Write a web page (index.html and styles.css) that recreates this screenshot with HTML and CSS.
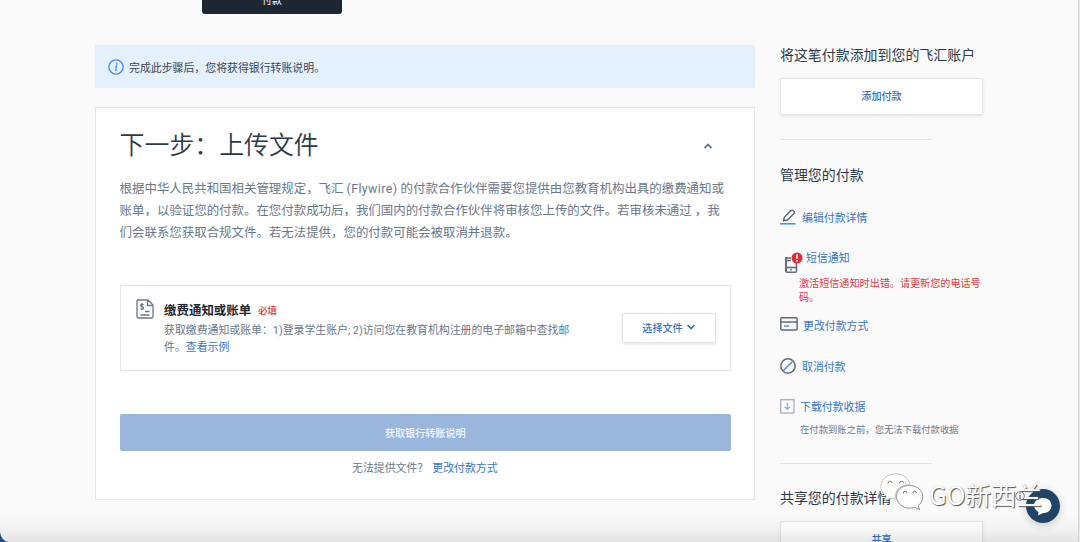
FILE: index.html
```html
<!DOCTYPE html>
<html lang="zh-CN">
<head>
<meta charset="utf-8">
<title>上传文件</title>
<link rel="stylesheet" href="styles.css">
</head>
<body>
<div class="page">
  <main class="main">
    <button class="pay">付款</button>
    <div class="notice">
      <svg class="notice-icon" viewBox="0 0 16 16" width="16" height="16" fill="none" stroke="#468df5"><circle cx="8" cy="8" r="7.1" stroke-width="1.4"/><circle cx="8.7" cy="4.9" r=".9" fill="#468df5" stroke="none"/><path d="M7.2 7.1h1.3l-.9 4.1h1.2" stroke-width="1.2"/></svg>
      <span>完成此步骤后，您将获得银行转账说明。</span>
    </div>
    <section class="card">
      <header class="card-head">
        <h1>下一步：上传文件</h1>
        <svg viewBox="0 0 10 8" width="10" height="8" fill="none" stroke="#69788c" stroke-width="1.8"><path d="M1.5 6 5 2.5 8.5 6"/></svg>
      </header>
      <p class="intro">根据中华人民共和国相关管理规定，飞汇 <span class="brand">(Flywire)</span> 的付款合作伙伴需要您提供由您教育机构出具的缴费通知或<br>账单，以验证您的付款。在您付款成功后，我们国内的付款合作伙伴将审核您上传的文件。若审核未通过 ，我<br>们会联系您获取合规文件。若无法提供，您的付款可能会被取消并退款。</p>
      <div class="upload">
        <svg class="doc" viewBox="0 0 18 20" width="18" height="20" fill="none" stroke="#69788c" stroke-width="1.3"><path d="M2 1h10l5 5v11.5q0 1.5-1.5 1.5H2.500Q1 19 1 17.500V2q0-1 1-1zM11.500 1v5.500H17M9 12.500h4.500M4.500 16h9"/><path d="M7.600 5.600C6.400 4.700 4.400 5 4.500 6.400c.1 1.500 3.100.9 3.100 2.600 0 1.500-2.200 1.600-3.400.6M6 4v7" stroke-width="1.100"/></svg>
        <div class="upload-text">
          <div class="upload-title"><strong>缴费通知或账单</strong><span class="required">必填</span></div>
          <p>获取缴费通知或账单：1)登录学生账户; 2)访问您在教育机构注册的电子邮箱中查找邮<br>件。<a>查看示例</a></p>
        </div>
        <button class="choose">选择文件<svg viewBox="0 0 10 8" width="10" height="8" fill="none" stroke="#2d6fc4" stroke-width="1.7"><path d="M1.500 2 5 5.500 8.500 2"/></svg></button>
      </div>
      <button class="submit">获取银行转账说明</button>
      <p class="alt"><span>无法提供文件？</span><a>更改付款方式</a></p>
    </section>
  </main>
  <aside class="side">
    <h2>将这笔付款添加到您的飞汇账户</h2>
    <button class="side-btn">添加付款</button>
    <hr>
    <h2 class="manage">管理您的付款</h2>
    <ul class="actions">
      <li class="edit"><svg viewBox="0 0 16 16" width="16" height="16" fill="none"><path d="m4.300 8.300 6.300-6.400q1.200-1 2.800-.2 1.700 1.500.4 3L7.400 11l-3.800.7z" stroke="#5f6b7a" stroke-width="1.500"/><path d="M0 14.800h15.500" stroke="#468df5" stroke-width="1.500"/></svg><a>编辑付款详情</a></li>
      <li class="sms"><svg viewBox="0 0 20 22" width="20" height="22" fill="none"><path d="M2 5.500V19q0 1.300 1.300 1.300h7.900q1.300 0 1.300-1.300V6M1.500 6H7M2 8.500h5M2 15.500h10.500" stroke="#5f6b7a" stroke-width="1.500"/><path d="M2 5v15" stroke="#5f6b7a" stroke-width="1.500"/><path d="M6 17.800h2" stroke="#468df5" stroke-width="1.500"/><circle cx="13" cy="6" r="5.500" fill="#dc3038"/><path d="M13 2.500v4.300M13 8v1.700" stroke="#fff" stroke-width="1.500"/></svg><a>短信通知</a></li>
      <li class="error">激活短信通知时出错。请更新您的电话号<br>码。</li>
      <li class="method"><svg viewBox="0 0 18 14" width="18" height="14" fill="none"><rect x=".8" y=".8" width="16.300" height="12.200" rx="1.200" stroke="#5f6b7a" stroke-width="1.500"/><path d="M1 5h16" stroke="#5f6b7a" stroke-width="1.500"/><path d="M4 9h5" stroke="#468df5" stroke-width="1.400"/></svg><a>更改付款方式</a></li>
      <li class="cancel"><svg viewBox="0 0 16 16" width="16" height="16" fill="none"><path d="M3.500 12.500 12.500 3.500" stroke="#468df5" stroke-width="1.500"/><circle cx="8" cy="8" r="7.200" stroke="#5f6b7a" stroke-width="1.500"/></svg><a>取消付款</a></li>
      <li class="receipt"><svg viewBox="0 0 15 15" width="15" height="15" fill="none"><rect x=".7" y=".7" width="13.300" height="13.300" stroke="#a1a9b3" stroke-width="1.200"/><path d="M7.400 3.800v6.500M4.700 7.700l2.700 2.700 2.700-2.700" stroke="#8cb2e8" stroke-width="1.300"/></svg><a>下载付款收据</a></li>
      <li class="hint">在付款到账之前，您无法下载付款收据</li>
    </ul>
    <hr>
    <h2 class="share">共享您的付款详情</h2>
    <button class="side-btn">共享</button>
  </aside>
  <div class="shade"></div>
  <div class="edge"></div>
  <svg class="corner" viewBox="0 0 8 10" width="8" height="10"><path d="M0 0q1 8 8 10H0z" fill="#244f86"/></svg>
  <div class="chat"><svg viewBox="0 0 34 34" width="34" height="34"><circle cx="17" cy="17" r="17" fill="#214466"/><path d="M17 9c5 0 8.500 3 8.500 7.500s-3.500 7.500-8.500 7.500l-5 2.500.5-3.500C10 21.500 8 19 8 16.500 8 12 12 9 17 9z" fill="#fff"/></svg></div>
  <div class="watermark">
    <svg class="wechat" viewBox="0 0 44 38" width="44" height="38" fill="#fff"><path d="M15.500 1C7 1 1 6.500 1 13.500c0 4 2 7.500 5.500 9.700L5 27.500l5-2.500 5.500.8c-2-7 4-14.500 14.500-14.300C28.500 5 23 1 15.500 1z" stroke="#ccc" stroke-width=".6"/><path d="M29 12.500c-7.500 0-12.500 5-12.500 11S22 35 29.500 35c2 0 3.500-.3 5-.8l5 2.500-1.500-4c3-2.200 4.700-5.200 4.700-9 0-6.200-6-11.200-13.700-11.200z" stroke="#999" stroke-width=".8"/><path d="M8 10.500a2 2 0 1 1 4-.5M19.500 10.500a2 2 0 1 1 4-.5M23.500 20.500a1.700 1.700 0 1 1 3.300-.5M33 20.500a1.700 1.700 0 1 1 3.300-.5" fill="none" stroke="#777" stroke-width="1"/></svg>
    <span>GO新西兰</span>
  </div>
  <svg class="info-mark" viewBox="0 0 10 12" width="10" height="12" fill="none" stroke="#6c7c98"><circle cx="5" cy="6" r="4.300"/><path d="M5 3v1M5 5v4" stroke-width="1.300"/></svg>
</div>
</body>
</html>
```
FILE: styles.css
```css
* { box-sizing: border-box; margin: 0; padding: 0; }
body {
  font-family: Roboto, "Noto Sans CJK SC", sans-serif;
  background: #fafafa;
  color: #69788c;
  font-size: 10.9px;
}
.page {
  position: relative;
  display: flex;
  gap: 25px;
  height: 542px;
  padding-left: 95px;
  overflow: hidden;
}
button { font: inherit; border: 0; display: flex; align-items: center; justify-content: center; }
svg { flex: none; display: block; }
a { color: #3877c9; }
h1, h2 { font-weight: 400; color: #2c3a49; white-space: nowrap; }

.main { width: 660px; flex: none; display: flex; flex-direction: column; }
.pay {
  width: 140px;
  height: 36px;
  flex: none;
  margin: -22px 0 31px 107px;
  padding-top: 7px;
  border-radius: 3px;
  background: #1c2733;
  color: #fff;
  font-size: 10px;
}
.notice {
  display: flex;
  align-items: center;
  gap: 5px;
  height: 43px;
  padding-left: 13px;
  background: #e4f0fe;
  color: #3a4654;
}
.card {
  display: flex;
  flex-direction: column;
  height: 393px;
  margin-top: 19px;
  padding: 0 24px 0 23.6px;
  border: 1px solid #e3e7ea;
  background: #fff;
}
.card-head {
  display: flex;
  align-items: center;
  justify-content: space-between;
  height: 76px;
  padding-right: 17px;
}
h1 { font-size: 24.9px; line-height: 36px; font-weight: 350; }
.intro { font-size: 12.45px; line-height: 21.8px; margin-top: -6px; white-space: nowrap; }
.brand { letter-spacing: .38px; }
.upload {
  display: flex;
  align-items: flex-start;
  height: 86px;
  margin-top: 42px;
  padding: 13px 14px 0 15px;
  border: 1px solid #e1e5e9;
  width: 611.4px;
}
.upload-text { flex: 1; margin: 1px 0 0 10.500px; line-height: 17.5px; white-space: nowrap; }
.upload-text p { margin-top: .5px; letter-spacing: -.02px; }
.upload-title { display: flex; align-items: center; gap: 7px; height: 21px; }
.upload-title strong { font-size: 12.45px; font-weight: 600; color: #1c2733; }
.required { font-size: 9.3px; font-weight: 500; color: #e02b34; }
.choose {
  width: 94px;
  height: 30px;
  margin-top: 14px;
  padding-bottom: 2px;
  gap: 3px;
  border: 1px solid #dfe3e8;
  border-radius: 2px;
  background: #fff;
  box-shadow: 0 1px 3px rgba(40, 60, 80, .14);
  color: #2d6fc4;
  font-size: 10.1px;
  font-weight: 500;
}
.submit {
  width: 611.4px;
  height: 37px;
  margin-top: 43px;
  padding-bottom: 1px;
  border-radius: 2px;
  background: #9ab6dd;
  color: #f5f9ff;
  font-size: 10.1px;
  font-weight: 500;
}
.alt { display: flex; justify-content: center; gap: 4px; margin-top: 9px; line-height: 18px; }

.side { width: 204px; flex: none; display: flex; flex-direction: column; padding-top: 44px; }
h2 { font-size: 13.95px; line-height: 22px; flex: none; }
.side-btn {
  width: 203px;
  height: 37px;
  flex: none;
  margin-top: 11.500px;
  padding-bottom: 2px;
  border: 1px solid #e3e6ea;
  border-radius: 2px;
  background: #fff;
  box-shadow: 0 1px 3px rgba(40, 60, 80, .12);
  color: #2d6fc4;
  font-size: 10.1px;
  font-weight: 500;
}
hr { width: 152px; border: 0; border-top: 1px solid #dfe2e5; margin-top: 24.500px; flex: none; }
.manage { margin-top: 24px; }
.actions { list-style: none; height: 277px; flex: none; white-space: nowrap; }
.actions li { display: flex; align-items: center; height: 18px; }
.actions .edit { margin-top: 22px; gap: 6px; }
.actions .sms { height: 22px; margin-top: 26px; padding-left: 4px; gap: 2px; align-items: flex-start; line-height: 14px; }
.actions .error { display: block; height: 28px; margin-top: 2.500px; padding-left: 19px; line-height: 14px; font-size: 10.1px; color: #dc3c43; }
.actions .method { margin-top: 11.500px; gap: 5px; }
.method svg { margin-top: -3px; }
.actions .cancel { margin-top: 23px; gap: 6px; }
.actions .receipt { margin-top: 22px; gap: 5px; }
.actions .hint { margin-top: 5px; padding-left: 20px; font-size: 9.33px; }
.actions + hr { margin-top: 0; }
.share { margin-top: 23px; }

.shade { position: absolute; inset: auto 0 0 0; height: 30px; background: linear-gradient(rgba(0, 0, 0, 0), rgba(0, 0, 0, .025) 50%, rgba(0, 0, 0, .09)); }
.edge { position: absolute; top: 0; right: 0; width: 2px; height: 542px; background: #e9e9e9; border-left: 1px solid #d5d5d5; }
.corner { position: absolute; left: 0; bottom: 0; }
.chat { position: absolute; left: 1026px; top: 489px; border-radius: 50%; box-shadow: 0 2px 8px rgba(0, 0, 0, .2); }
.watermark {
  position: absolute;
  left: 880px;
  top: 473px;
  display: flex;
  gap: 5px;
  color: #fff;
  font: 25.5px/42px "Noto Sans CJK SC", sans-serif;
  text-shadow: 1px 1px 1px #555, 0 0 1px #bbb;
  white-space: nowrap;
}
.wechat { filter: drop-shadow(.7px .8px .5px #888); }
.info-mark { position: absolute; left: 1015px; top: 490px; }
```
